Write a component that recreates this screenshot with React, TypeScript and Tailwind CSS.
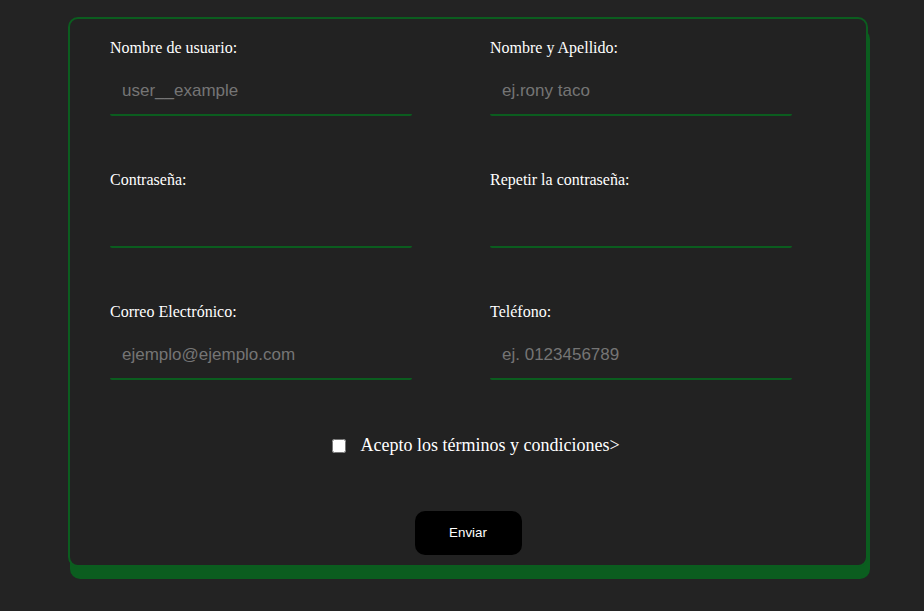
const fields = [
  { label: "Nombre de usuario:", placeholder: "user__example", type: "text" },
  { label: "Nombre y Apellido:", placeholder: "ej.rony taco", type: "text" },
  { label: "Contraseña:", placeholder: "", type: "password" },
  { label: "Repetir la contraseña:", placeholder: "", type: "password" },
  { label: "Correo Electrónico:", placeholder: "ejemplo@ejemplo.com", type: "email" },
  { label: "Teléfono:", placeholder: "ej. 0123456789", type: "tel" },
];

function Field({ label, placeholder, type }: { label: string; placeholder: string; type: string }) {
  return (
    <div className="flex flex-col">
      <label className="text-white text-[16px] leading-[18px] font-['Liberation_Serif',serif]">{label}</label>
      <input
        type={type}
        placeholder={placeholder}
        className="mt-[13px] h-[46px] w-[302px] bg-transparent px-3 pb-[2px] text-[17px] text-white font-['Liberation_Sans',Arial,sans-serif] placeholder:text-[#757575] border-b-2 border-[#0b5d1f] rounded-[2px] outline-none"
      />
    </div>
  );
}

export default function App() {
  return (
    <div className="min-h-[611px] w-full bg-[#232323] pt-[17px] pl-[68px]">
      <form className="w-[800px] h-[550px] rounded-[10px] border-2 border-[#0b5d1f] bg-[#222222] shadow-[2px_12px_0_#0b5d1f] pt-[20px] px-[40px]">
        <div className="grid grid-cols-[302px_302px] gap-x-[78px] gap-y-[55px]">
          {fields.map((f) => (
            <Field key={f.label} {...f} />
          ))}
        </div>
        <div className="mt-[52px] flex items-center justify-center gap-[14px] pl-[16px]">
          <input type="checkbox" className="w-[14px] h-[14px] m-0" />
          <span className="text-white text-[18px] font-['Liberation_Serif',serif]">Acepto los términos y condiciones&gt;</span>
        </div>
        <div className="mt-[52px] flex justify-center">
          <button
            type="button"
            className="w-[107px] h-[44px] rounded-[10px] bg-black text-white text-[13.33px] font-['Liberation_Sans',Arial,sans-serif]"
          >
            Enviar
          </button>
        </div>
      </form>
    </div>
  );
}
